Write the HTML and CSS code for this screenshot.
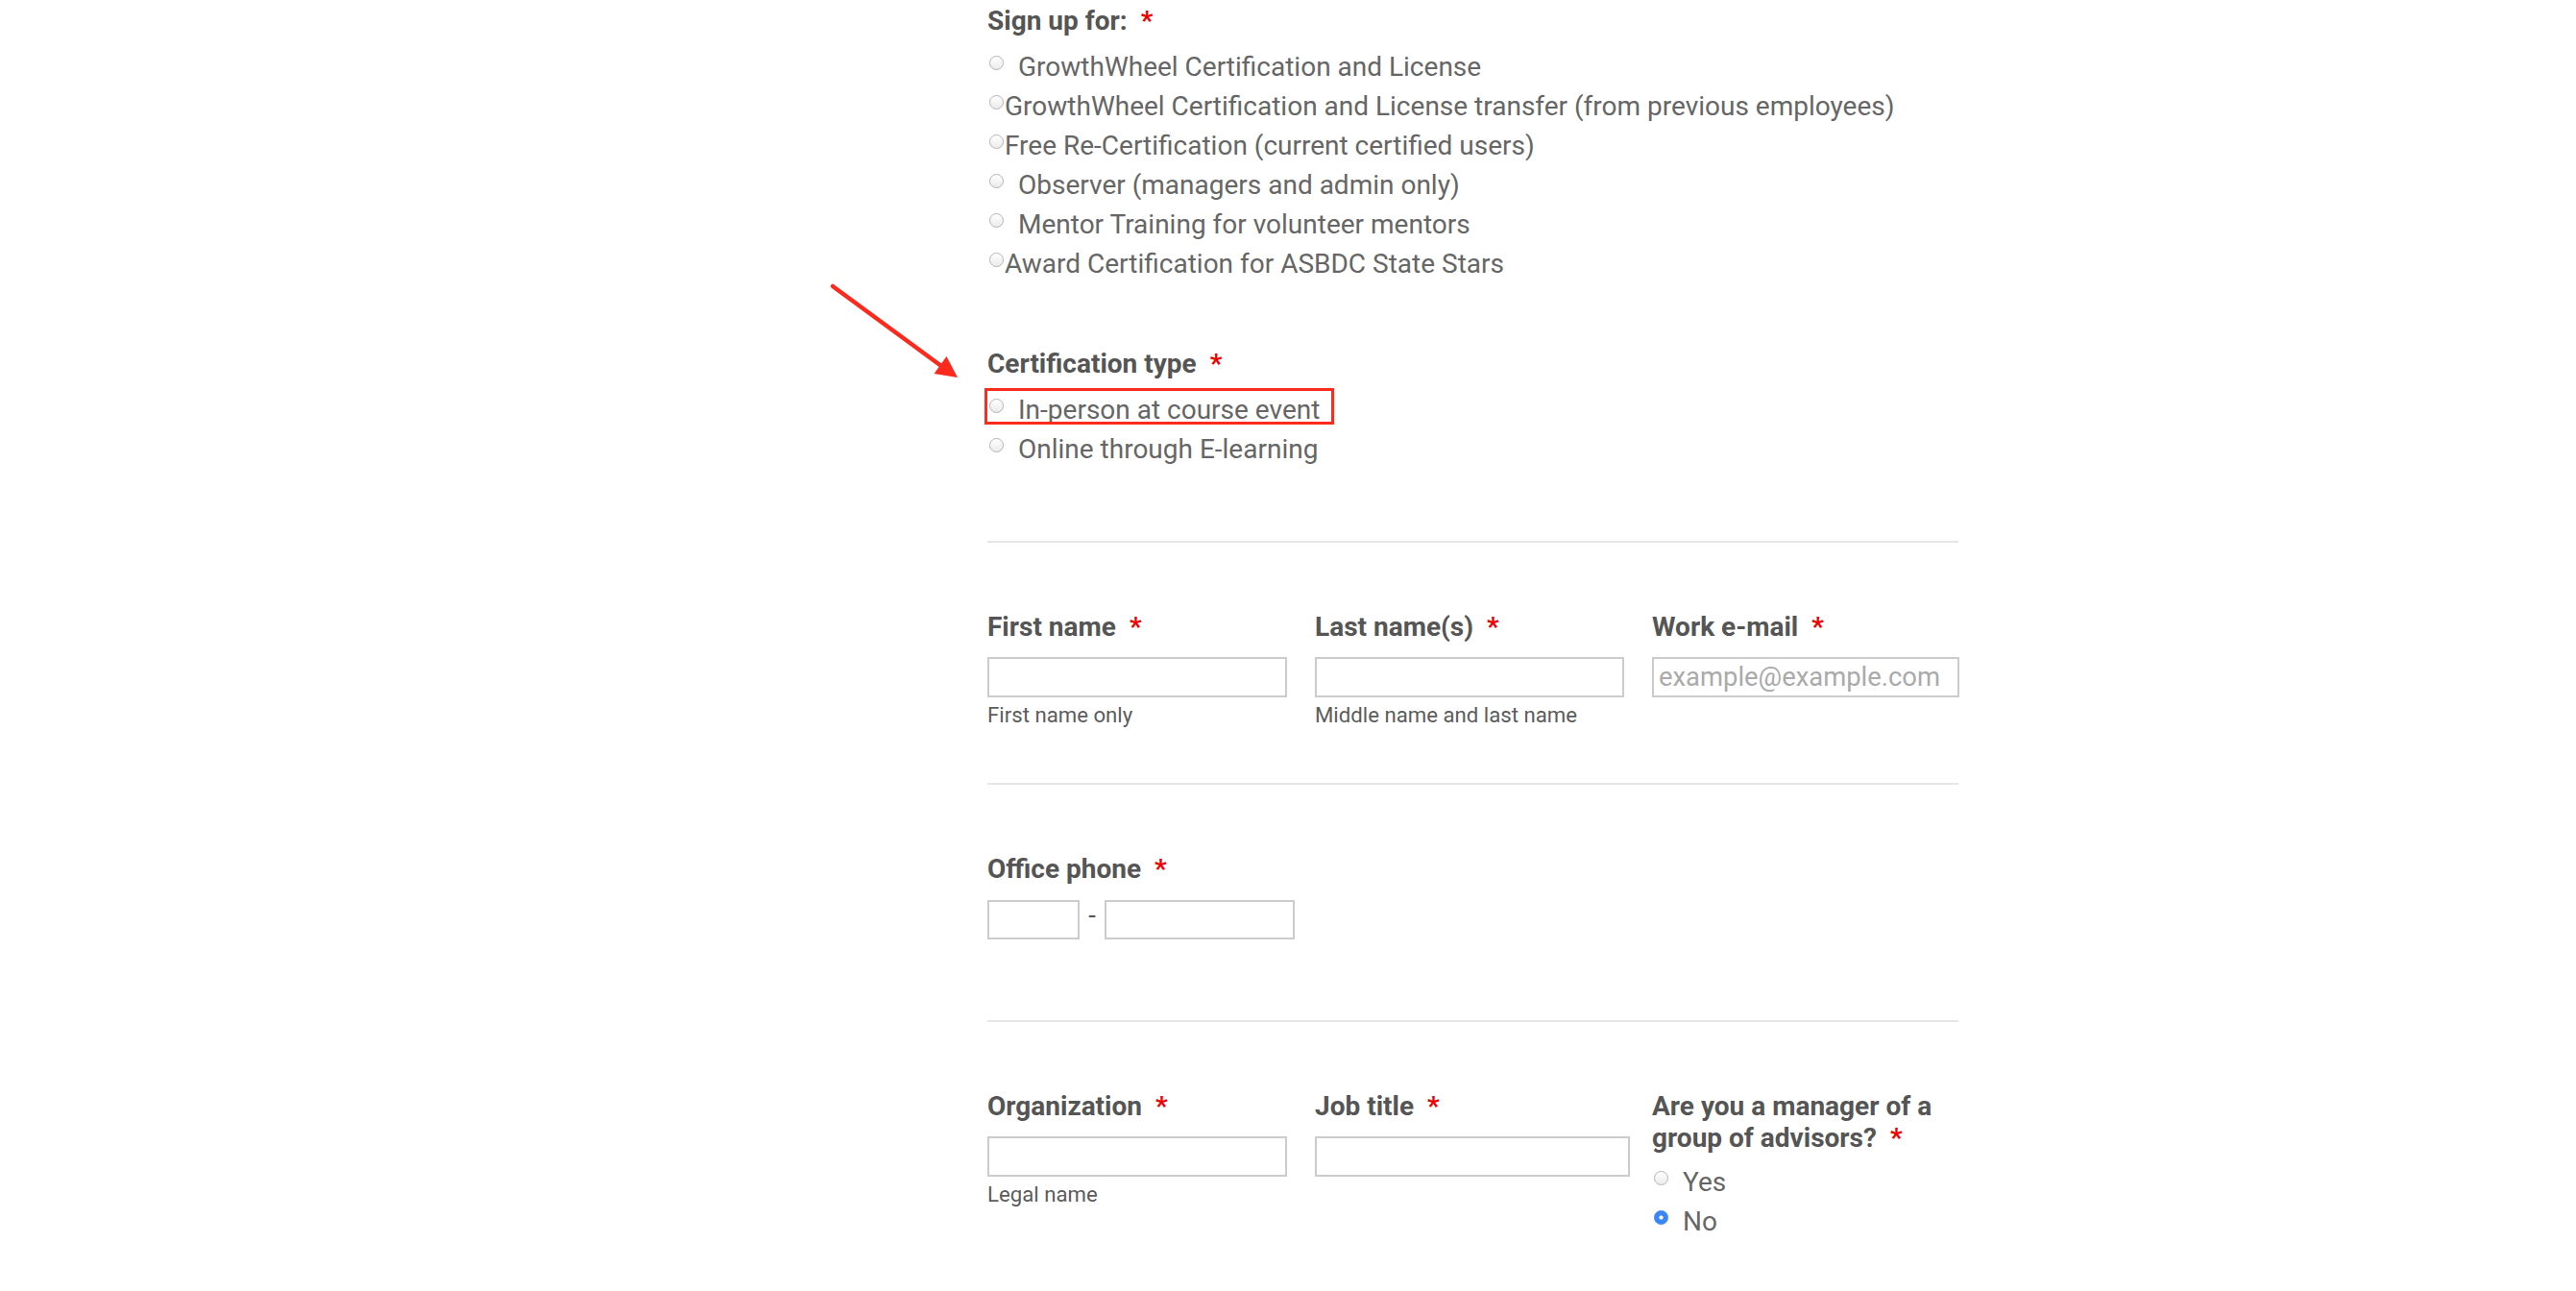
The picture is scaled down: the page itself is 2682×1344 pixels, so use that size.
FILE: index.html
```html
<!DOCTYPE html>
<html lang="en">
<head>
    <meta charset="UTF-8">
    <meta name="viewport" content="width=device-width, initial-scale=1.0">
    <title>Certification Sign Up</title>
    <link rel="stylesheet" href="styles.css">
</head>
<body>
    <!-- annotation arrow pointing at the highlighted option -->
    <svg class="annot-arrow" width="160" height="120" viewBox="0 0 160 120">
        <line x1="7" y1="8" x2="120" y2="91" stroke="#fb2a1c" stroke-width="4.5" stroke-linecap="round"/>
        <polygon points="137,103 112.5,99 125.5,81" fill="#fb2a1c"/>
    </svg>

    <form class="form">
        <section class="section section-top">
            <div class="group">
                <div class="field-label">Sign up for: <span class="req">*</span></div>
                <div class="options">
                    <label class="option"><input type="radio" name="signup"><span class="opt-text spaced">GrowthWheel Certification and License</span></label>
                    <label class="option"><input type="radio" name="signup"><span class="opt-text">GrowthWheel Certification and License transfer (from previous employees)</span></label>
                    <label class="option"><input type="radio" name="signup"><span class="opt-text">Free Re-Certification (current certified users)</span></label>
                    <label class="option"><input type="radio" name="signup"><span class="opt-text spaced">Observer (managers and admin only)</span></label>
                    <label class="option"><input type="radio" name="signup"><span class="opt-text spaced">Mentor Training for volunteer mentors</span></label>
                    <label class="option"><input type="radio" name="signup"><span class="opt-text">Award Certification for ASBDC State Stars</span></label>
                </div>
            </div>

            <div class="group group-next">
                <div class="field-label">Certification type <span class="req">*</span></div>
                <div class="options">
                    <label class="option highlight"><input type="radio" name="certtype"><span class="opt-text spaced">In-person at course event</span></label>
                    <label class="option"><input type="radio" name="certtype"><span class="opt-text spaced">Online through E-learning</span></label>
                </div>
            </div>
        </section>

        <section class="section">
            <div class="row">
                <div class="field">
                    <div class="field-label">First name <span class="req">*</span></div>
                    <input class="text-input" type="text">
                    <div class="sublabel">First name only</div>
                </div>
                <div class="field">
                    <div class="field-label">Last name(s) <span class="req">*</span></div>
                    <input class="text-input" type="text">
                    <div class="sublabel">Middle name and last name</div>
                </div>
                <div class="field">
                    <div class="field-label">Work e-mail <span class="req">*</span></div>
                    <input class="text-input" type="email" placeholder="example@example.com">
                </div>
            </div>
        </section>

        <section class="section section-phone">
            <div class="field">
                <div class="field-label">Office phone <span class="req">*</span></div>
                <div class="phone">
                    <input class="text-input area" type="text">
                    <span class="dash">-</span>
                    <input class="text-input number" type="text">
                </div>
            </div>
        </section>

        <section class="section">
            <div class="row">
                <div class="field">
                    <div class="field-label">Organization <span class="req">*</span></div>
                    <input class="text-input" type="text">
                    <div class="sublabel">Legal name</div>
                </div>
                <div class="field">
                    <div class="field-label">Job title <span class="req">*</span></div>
                    <input class="text-input job" type="text">
                </div>
                <div class="field">
                    <div class="field-label tight">Are you a manager of a group of advisors? <span class="req">*</span></div>
                    <div class="options">
                        <label class="option"><input type="radio" name="manager"><span class="opt-text spaced">Yes</span></label>
                        <label class="option"><input type="radio" name="manager" checked><span class="opt-text spaced">No</span></label>
                    </div>
                </div>
            </div>
        </section>
    </form>
</body>
</html>
```

FILE: styles.css
```css
* {
    box-sizing: border-box;
}

body {
    margin: 0;
    background-color: #ffffff;
    font-family: Roboto, "Liberation Sans", sans-serif;
    color: #555555;
}

.annot-arrow {
    position: absolute;
    left: 860px;
    top: 290px;
}

.form {
    width: 1011px;
    margin-left: 1028px;
    padding-top: 5px;
}

.section {
    border-top: 2px solid #e6e6e6;
    padding: 71px 0 58px;
}

.section-top {
    border-top: none;
    padding: 0 0 75px;
}

.section-phone {
    padding-bottom: 84px;
}

.group-next {
    margin-top: 66px;
}

.field-label {
    font-size: 28px;
    font-weight: 700;
    line-height: 33px;
    color: #555555;
    margin-bottom: 15.5px;
}

.group .field-label {
    margin-bottom: 11px;
}

.field-label.tight {
    margin-bottom: 9px;
}

.req {
    color: #ee0000;
    margin-left: 7px;
}

.options {
    display: flex;
    flex-direction: column;
}

.option {
    position: relative;
    display: flex;
    align-items: flex-start;
    width: fit-content;
    font-size: 28px;
    line-height: 41.1px;
    color: #666666;
}

.option input[type="radio"] {
    appearance: none;
    -webkit-appearance: none;
    flex: none;
    width: 15px;
    height: 15px;
    margin: 9px 1px 0 2px;
    border: 1.5px solid #b4b4b4;
    border-radius: 50%;
    background: linear-gradient(#ffffff, #ebebeb);
}

.option input[type="radio"]:checked {
    border-color: #3a86f5;
    background: radial-gradient(circle, #ffffff 0 1.8px, #3a86f5 2.4px);
}

.opt-text.spaced {
    margin-left: 14px;
}

.option.highlight::after {
    content: "";
    position: absolute;
    left: -3px;
    top: -2px;
    right: -15px;
    bottom: 5px;
    border: 3.5px solid #fb2b1d;
}

.row {
    display: grid;
    grid-template-columns: 312px 322px 320px;
    column-gap: 29px;
}

.field {
    display: flex;
    flex-direction: column;
    align-items: flex-start;
}

.text-input {
    width: 100%;
    height: 41.5px;
    border: 2px solid #cccccc;
    border-radius: 0;
    padding: 0 5px;
    font-family: Roboto, "Liberation Sans", sans-serif;
    font-size: 27.4px;
    color: #555555;
    background-color: #ffffff;
}

.text-input::placeholder {
    color: #aaaaaa;
}

.text-input.job {
    width: 328px;
}

.sublabel {
    margin-top: 5.5px;
    font-size: 22.2px;
    line-height: 26px;
    color: #5c5c5c;
}

.phone {
    display: flex;
    align-items: center;
}

.phone .area {
    width: 96px;
    height: 41px;
}

.phone .number {
    width: 198px;
    height: 41px;
}

.dash {
    width: 26px;
    text-align: center;
    font-size: 27.4px;
    line-height: 41px;
    color: #555555;
    margin-top: -8px;
}
```
